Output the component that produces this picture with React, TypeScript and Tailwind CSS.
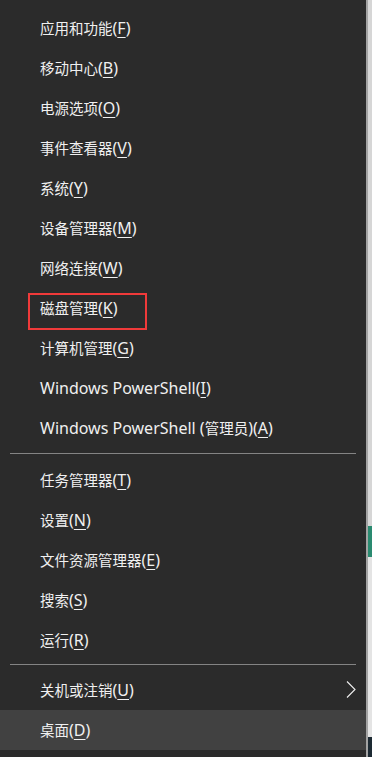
import React from "react";

type Item = { label: string; hot: string; active?: boolean; sub?: boolean; marked?: boolean };

const TOP: Item[] = [
  { label: "应用和功能", hot: "F" },
  { label: "移动中心", hot: "B" },
  { label: "电源选项", hot: "O" },
  { label: "事件查看器", hot: "V" },
  { label: "系统", hot: "Y" },
  { label: "设备管理器", hot: "M" },
  { label: "网络连接", hot: "W" },
  { label: "磁盘管理", hot: "K", marked: true },
  { label: "计算机管理", hot: "G" },
  { label: "Windows PowerShell", hot: "I" },
  { label: "Windows PowerShell (管理员)", hot: "A" },
];

const MIDDLE: Item[] = [
  { label: "任务管理器", hot: "T" },
  { label: "设置", hot: "N" },
  { label: "文件资源管理器", hot: "E" },
  { label: "搜索", hot: "S" },
  { label: "运行", hot: "R" },
];

const BOTTOM: Item[] = [
  { label: "关机或注销", hot: "U", sub: true },
  { label: "桌面", hot: "D", active: true },
];

const CJK = "font-['Noto_Sans_CJK_SC',sans-serif] text-[14.5px]";
const LATIN = "font-['Noto_Sans','Noto_Sans_CJK_SC',sans-serif] text-[16px]";

// CJK and Latin runs get different sizes, as in the Windows menu font
function Runs({ text }: { text: string }) {
  const parts = text.split(/([\u3400-\u9fff]+)/).filter(Boolean);
  return (
    <>
      {parts.map((p, i) => (
        <span key={i} className={/[\u3400-\u9fff]/.test(p) ? CJK : LATIN}>
          {p.replace(/ /g, "\u00a0")}
        </span>
      ))}
    </>
  );
}

function Row({ item }: { item: Item }) {
  return (
    <div className={`relative flex h-10 items-center justify-between pl-10 pr-[10px] text-[#f0f0f0] ${item.active ? "bg-[#414141]" : ""}`}>
      <span className="whitespace-nowrap leading-none">
        <Runs text={item.label} />
        <span className={LATIN}>
          (<span className="underline underline-offset-[3px] decoration-1">{item.hot}</span>)
        </span>
      </span>
      {item.sub && (
        <svg width="10" height="17" viewBox="0 0 10 17" className="mt-[-2px]">
          <polyline points="1,0.5 9,8.5 1,16.5" fill="none" stroke="#f0f0f0" strokeWidth="1.1" />
        </svg>
      )}
      {item.marked && (
        <div className="absolute left-[28px] top-[5px] h-[37px] w-[119px] border-2 border-[#f03a3a]" />
      )}
    </div>
  );
}

function Divider({ className }: { className: string }) {
  return <div className={`mx-[10px] h-px bg-[#848484] ${className}`} />;
}

export default function App() {
  return (
    <div className="flex h-[757px] w-[372px] bg-[#2b2b2b]">
      <div className="flex w-[366px] flex-col pt-2">
        {TOP.map(it => <Row key={it.hot} item={it} />)}
        <Divider className="mt-[5px] mb-[6px]" />
        {MIDDLE.map(it => <Row key={it.hot} item={it} />)}
        <Divider className="mt-[4px] mb-[5px]" />
        {BOTTOM.map(it => <Row key={it.hot} item={it} />)}
      </div>
      <div className="w-[2px] bg-[#a3a3a3]" />
      {/* sliver of the desktop window behind the menu */}
      <div className="flex w-[4px] flex-col bg-[#d6d6d6]">
        <div className="h-[526px]" />
        <div className="h-[31px] bg-[#2a8a70]" />
        <div className="h-[180px] bg-[#e4e4e4]" />
        <div className="flex-1 bg-[#1d2a33]" />
      </div>
    </div>
  );
}
